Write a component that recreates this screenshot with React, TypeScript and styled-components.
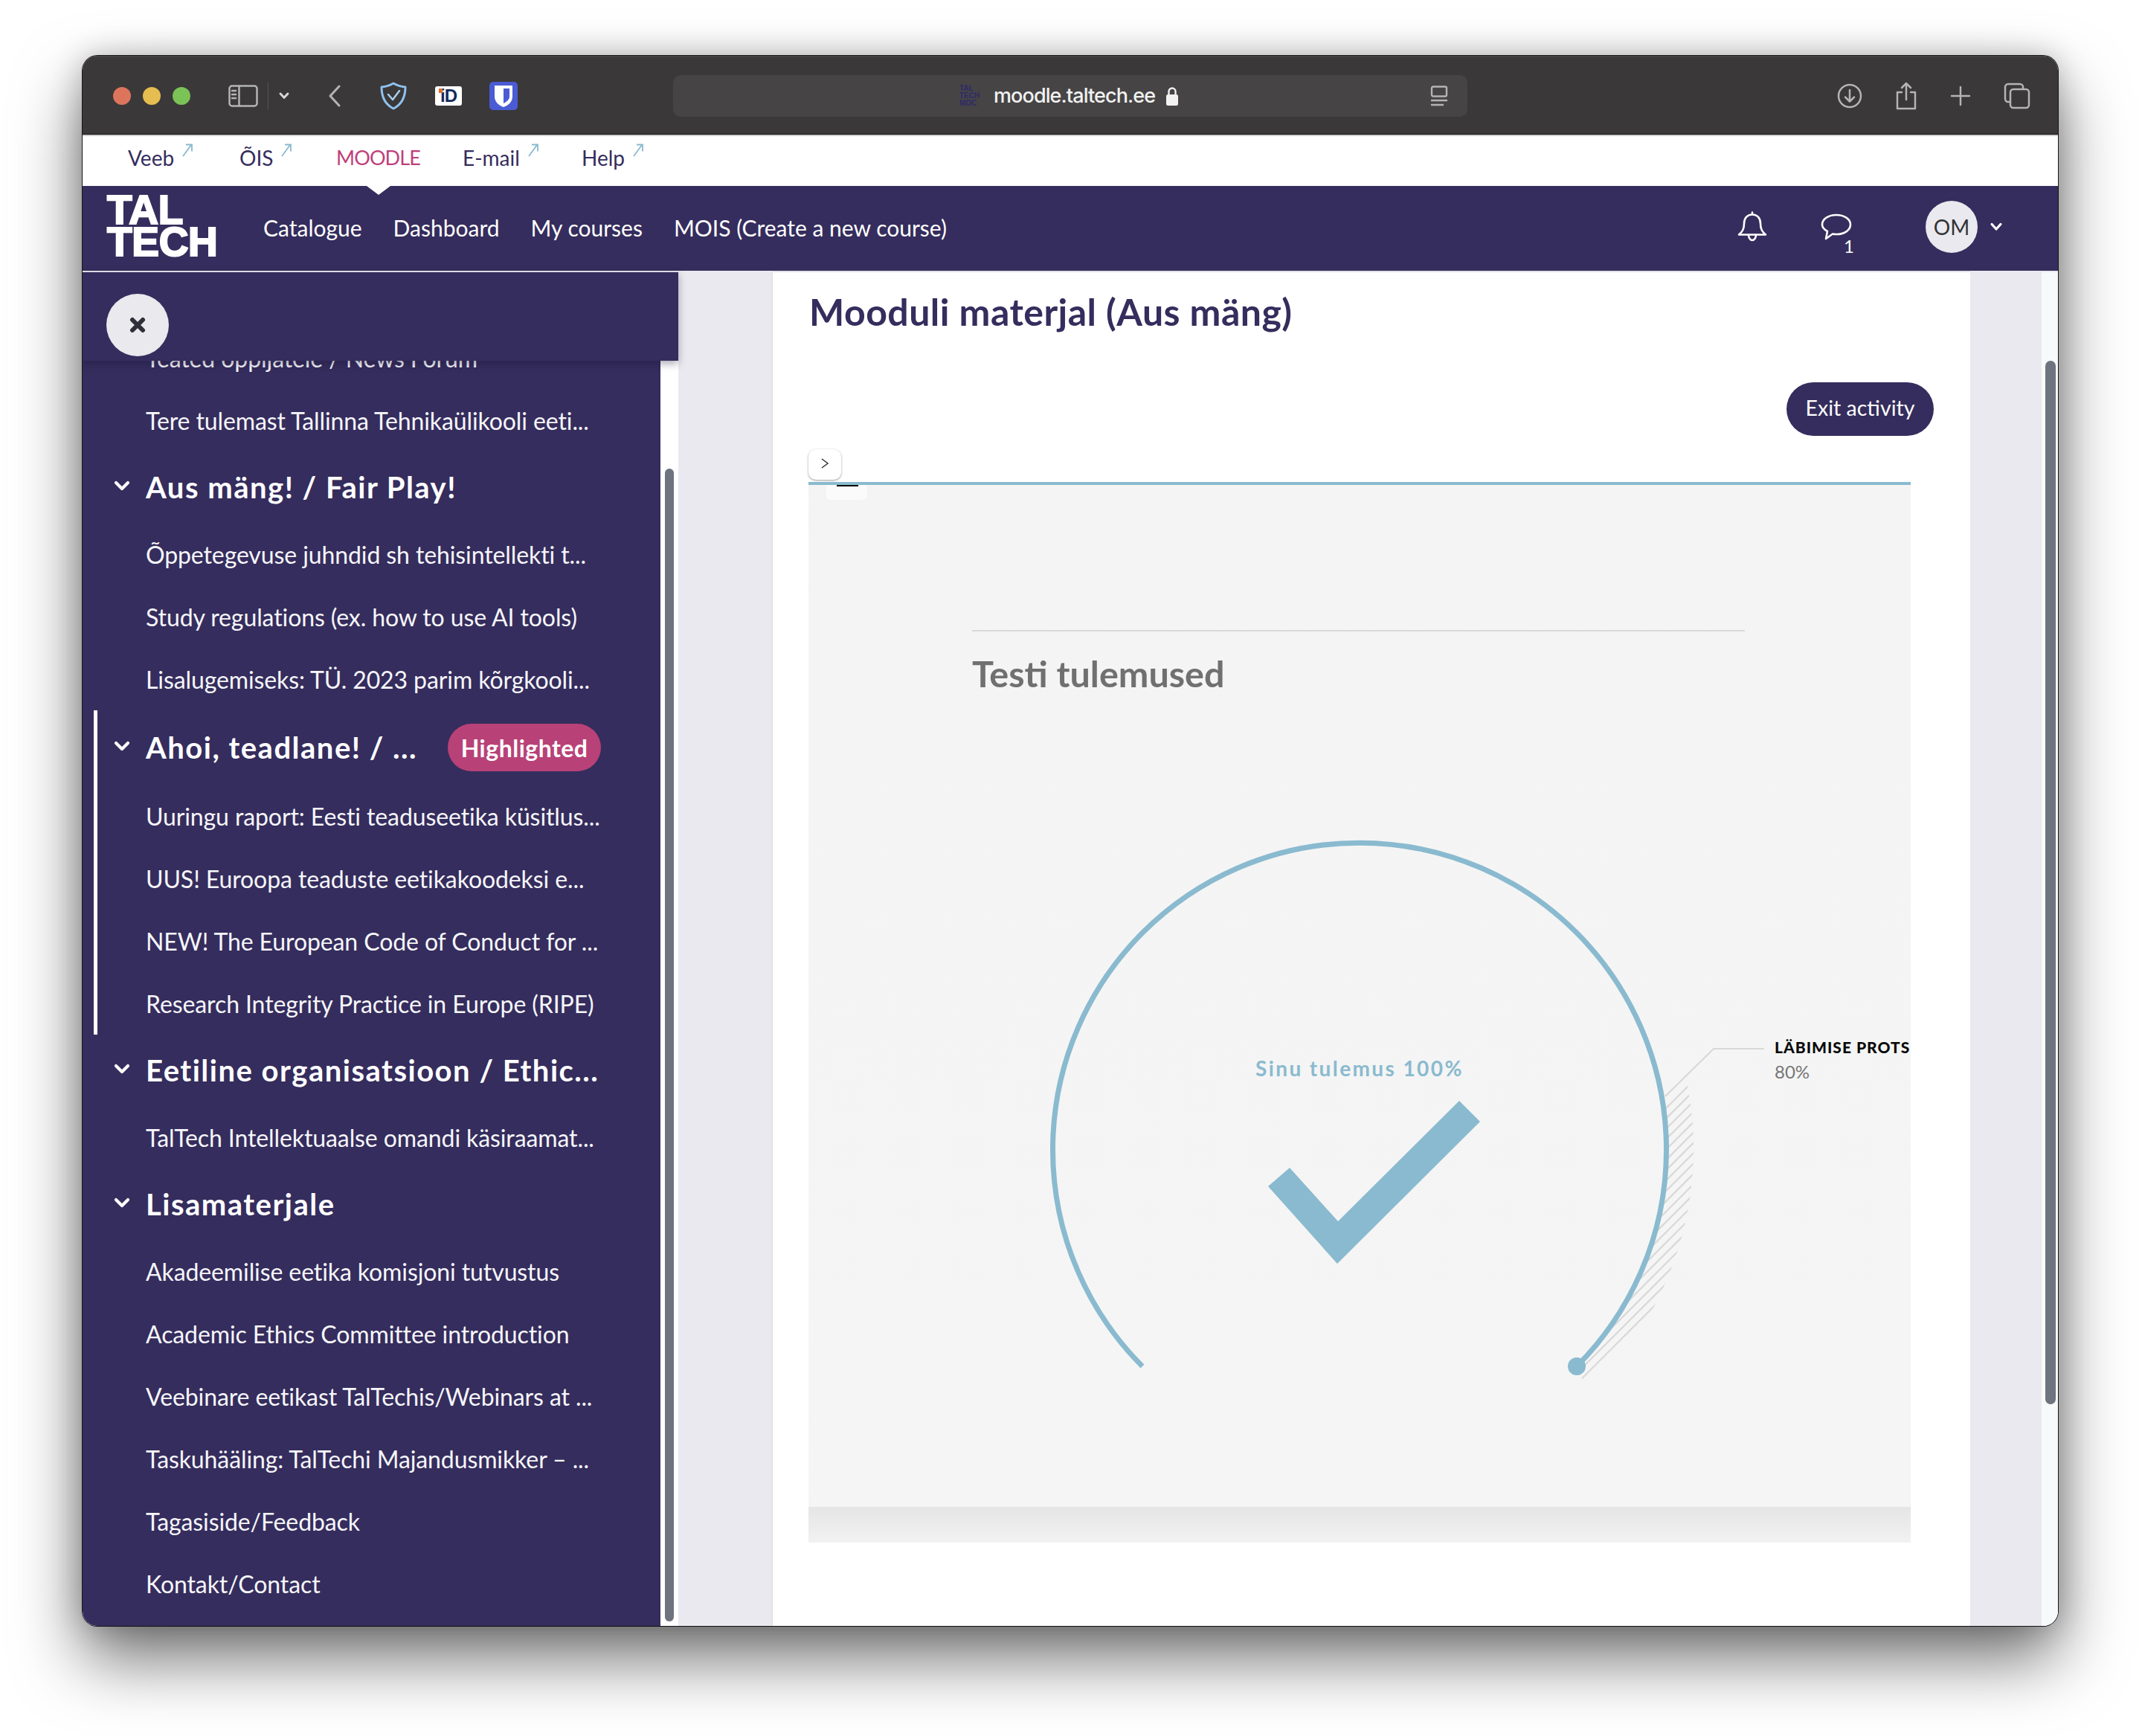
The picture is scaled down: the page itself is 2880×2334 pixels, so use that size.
import React from "react";
import styled, { createGlobalStyle } from "styled-components";

const ink = "#352d5d";
const sky = "#8abacf";
const body = `"Lato", "Open Sans", sans-serif`;

const Global = createGlobalStyle`
  html, body { margin: 0; padding: 0; background: #fff; }
  * { box-sizing: border-box; }
`;

const Page = styled.div`
  width: 2880px; height: 2334px; padding: 75px 113px 148px 111px;
  background: #fff; font-family: ${body}; overflow: hidden;
`;
const Win = styled.div`
  width: 100%; height: 100%; display: flex; flex-direction: column;
  border-radius: 20px; overflow: hidden; background: #fff;
  box-shadow: 0 44px 90px rgba(0,0,0,.56), 0 0 40px rgba(0,0,0,.22), 0 0 0 1px #222;
`;

/* ---------- browser toolbar ---------- */
const Toolbar = styled.div`
  height: 106px; flex: none; background: #3a3839; position: relative;
  display: flex; align-items: center; padding: 0 37px 0 41px;
  border-bottom: 1px solid #111; border-top: 2px solid #444;
`;
const Dots = styled.div`display: flex; gap: 16px; margin-right: 51px;`;
const Dot = styled.span<{ $c: string }>`width: 24px; height: 24px; border-radius: 50%; background: ${p => p.$c};`;
const Tool = styled.span<{ $ml?: number; $w?: number }>`
  display: flex; align-items: center; justify-content: center; flex: none;
  margin-left: ${p => p.$ml ?? 0}px; width: ${p => (p.$w ? p.$w + "px" : "auto")};
`;
const Divider = styled.span`width: 1px; height: 36px; background: #555; margin-left: 13px;`;
const IdBadge = styled.span`
  width: 36px; height: 26px; margin-left: 37px; background: #fff; border-radius: 3px; flex: none; position: relative;
  display: flex; align-items: center; justify-content: center;
  font: 900 24px/1 "Liberation Sans", sans-serif; color: #14295e; letter-spacing: -1px;
  &::before { content: ""; position: absolute; left: 5px; top: 3px; width: 5px; height: 6px; background: #e0702e; }
`;
const UrlBar = styled.div`
  width: 1068px; height: 56px; margin-left: 209px; flex: none; border-radius: 10px; background: #464445;
  display: flex; align-items: center; padding: 0 26px 0 385px; position: relative;
`;
const Favi = styled.span`
  width: 34px; font: 900 10px/10px "Liberation Sans", sans-serif; color: #2e2a6a; flex: none; margin-right: 12px;
`;
const UrlText = styled.span`
  font: 500 27px/1 "Inter", sans-serif; color: #f2f2f2; letter-spacing: -.9px; white-space: nowrap;
`;
const Spacer = styled.span`flex: 1;`;
const RightTools = styled.div`display: flex; align-items: center; gap: 44px; margin-left: auto; flex: none;`;

/* ---------- site link bar ---------- */
const LinkBar = styled.div`
  height: 69px; flex: none; background: #fff; display: flex; align-items: center;
  padding: 0 0 10px 61px; border-top: 2px solid #ccc; position: relative;
`;
const SiteLink = styled.a<{ $w: number; $active?: boolean }>`
  width: ${p => p.$w}px; display: flex; line-height: 1;
  font-size: ${p => (p.$active ? 27 : 28)}px; letter-spacing: ${p => (p.$active ? -0.9 : 0)}px;
  color: ${p => (p.$active ? "#c03f7a" : ink)};
`;
const Up = styled.svg`margin: -6px 0 0 10px;`;
const Notch = styled.span`
  position: absolute; left: 382px; bottom: -12px; z-index: 2; width: 0; height: 0;
  border-left: 16px solid transparent; border-right: 16px solid transparent; border-top: 12px solid #fff;
`;

/* ---------- site header ---------- */
const Header = styled.header`
  height: 116px; flex: none; background: ${ink}; border-bottom: 2px solid #e9e9ef;
  display: flex; align-items: center; color: #fff;
`;
const Logo = styled.div`
  width: 243px; padding-left: 33px; margin-top: -7px; flex: none;
  font: 900 55px/43px "Liberation Sans", sans-serif; letter-spacing: -.3px; color: #fff; -webkit-text-stroke: 2.2px #fff;
`;
const MainNav = styled.nav`display: flex; gap: 42px; font-size: 30px; margin-top: -3px;`;
const NavItem = styled.a`color: #fff; white-space: nowrap;`;
const HeaderIcons = styled.div`margin: -4px 0 0 auto; display: flex; align-items: center; padding-right: 74px;`;
const ChatWrap = styled.span`position: relative; display: flex; margin-left: 72px;`;
const ChatCount = styled.span`position: absolute; right: -3px; bottom: -20px; font-size: 24px; line-height: 1;`;
const Avatar = styled.span`
  width: 70px; height: 70px; margin-left: 99px; border-radius: 50%; background: #e9e9ef; color: #333; flex: none;
  display: flex; align-items: center; justify-content: center; font-size: 28px;
`;
const AvatarCaret = styled.svg`margin-left: 16px;`;

/* ---------- main ---------- */
const Main = styled.div`flex: 1; min-height: 0; display: flex;`;
const Side = styled.aside`width: 801px; flex: none; display: flex; position: relative; background: #fff;`;
const SideOverlay = styled.div`
  position: absolute; left: 0; top: 0; width: 801px; height: 119px; background: ${ink}; z-index: 2;
  box-shadow: 0 4px 10px rgba(20,15,50,.35);
`;
const CloseBtn = styled.button`
  position: absolute; left: 32px; top: 29px; width: 84px; height: 84px; border-radius: 50%; border: 0; padding: 0;
  background: #e9e9ee; display: flex; align-items: center; justify-content: center;
`;
const SideList = styled.div`
  width: 777px; flex: none; background: ${ink}; padding-top: 73px; overflow: hidden; color: #fff;
`;
const SideItem = styled.div`
  height: 84px; display: flex; align-items: center; padding-left: 85px;
  font-size: 32px; letter-spacing: -.1px; white-space: nowrap; color: #f6f6fa;
`;
const SectionRow = styled.div<{ $tall?: boolean }>`
  height: ${p => (p.$tall ? 100 : 96)}px; display: flex; align-items: center; padding-left: 42px;
  font-size: 40px; letter-spacing: 1.5px; font-weight: 700; white-space: nowrap; color: #fff;
`;
const Caret = styled.svg`width: 22px; height: 14px; margin-right: 21px; flex: none; margin-top: -4px;`;
const Badge = styled.span`
  margin-left: 41px; height: 64px; width: 206px; border-radius: 32px; background: #b84277;
  display: flex; align-items: center; justify-content: center; font-size: 32px; letter-spacing: .5px; font-weight: 700;
`;
const ActiveGroup = styled.div`
  margin-left: 15px; border-left: 5px solid #fff;
  & > div { margin-left: -20px; }
`;
const SideTrack = styled.div`flex: 1; padding: 264px 6px 6px;`;
const Thumb = styled.div`height: 100%; background: #6f7380; border-radius: 6px;`;

const Gutter = styled.div<{ $w: number }>`width: ${p => p.$w}px; flex: none; background: #e9e9ef;`;
const Content = styled.main`
  flex: 1; min-width: 0; background: #fff; padding: 23px 49px 0 48px; box-shadow: 0 0 3px rgba(0,0,0,.12);
`;
const Title = styled.h2`
  margin: 0 0 0 1px; font-size: 50px; line-height: 60px; font-weight: 700; color: ${ink}; letter-spacing: .47px;
`;
const ExitRow = styled.div`display: flex; justify-content: flex-end; margin-top: 65px;`;
const ExitBtn = styled.button`
  width: 198px; height: 72px; border-radius: 36px; border: 0; background: ${ink}; color: #fff;
  font: 400 28.5px ${body}; padding: 0 0 4px;
`;
const Tab = styled.div`
  width: 44px; height: 41px; margin-top: 18px; border-radius: 10px; background: #fff; padding-bottom: 3px;
  box-shadow: 0 1px 3px rgba(0,0,0,.4); display: flex; align-items: center; justify-content: center;
`;
const Activity = styled.section`
  width: 1482px; height: 1426px; margin-top: 3px; display: flex; flex-direction: column; overflow: hidden; position: relative;
  border-top: 4px solid ${sky}; background: linear-gradient(#f4f4f4 0, #f5f5f5 1374px, #e5e5e5 1374px, #f2f2f2 1422px);
`;
const DashBox = styled.span`
  position: absolute; left: 24px; top: 0; width: 55px; height: 20px; background: #fbfbfb; border-radius: 0 0 6px 6px;
  &::before { content: ""; position: absolute; left: 14px; top: 0; width: 29px; height: 2px; background: #000; }
`;
const ResultHead = styled.div`height: 348px; flex: none; padding: 195px 223px 0 220px;`;
const Rule = styled.div`height: 2px; background: #d9d9d9;`;
const ResultTitle = styled.h3`
  margin: 26px 0 0; font-size: 48.500px; line-height: 60px; font-weight: 700; color: #707070;
`;
const Stage = styled.div`position: relative; flex: none; width: 1482px; height: 1026px;`;
const GaugeSvg = styled.svg`display: block; position: absolute; left: 0; top: 0;`;
const Score = styled.span`
  position: absolute; left: 601px; top: 418px; font-size: 28px; line-height: 36px; font-weight: 700;
  letter-spacing: 2.4px; color: ${sky}; white-space: nowrap;
`;
const PassLabel = styled.span`
  position: absolute; left: 1299px; top: 396px; font-size: 21px; line-height: 24px; font-weight: 900;
  letter-spacing: 1px; color: #0a0a0a; white-space: nowrap;
`;
const PassValue = styled.span`
  position: absolute; left: 1299px; top: 428px; font-size: 24px; line-height: 26px; color: #777; white-space: nowrap;
`;
const PageTrack = styled.div`width: 22px; flex: none; background: #f8f9fb; padding: 119px 3px 298px 5px;`;
const PageThumb = styled.div`height: 100%; background: #6f7380; border-radius: 7px;`;

/* ---------- icons ---------- */
const ic = { fill: "none", stroke: "#b5b4b4", strokeWidth: 2.5, strokeLinecap: "round" as const, strokeLinejoin: "round" as const };

const SidebarIcon = () => (
  <svg width="40" height="30" viewBox="0 0 40 30" {...ic}>
    <rect x="1.5" y="1.5" width="37" height="27" rx="3.5" />
    <path d="M14.5 2v26M5 8h5M5 13h5M5 18h5" />
  </svg>
);
const Chevron = ({ size = 14, c = "#d8d8d8", w = 3 }: { size?: number; c?: string; w?: number }) => (
  <svg width={size} height={size * 0.7} viewBox="0 0 14 10" fill="none" stroke={c} strokeWidth={w} strokeLinecap="round" strokeLinejoin="round">
    <path d="M2 2l5 5.5L12 2" />
  </svg>
);
const BackIcon = () => (
  <svg width="18" height="30" viewBox="0 0 18 30" {...ic} strokeWidth={3}><path d="M15 2L3 15l12 13" /></svg>
);
const ShieldIcon = () => (
  <svg width="38" height="38" viewBox="0 0 38 38" fill="none" stroke="#8fc1ef" strokeWidth="3" strokeLinejoin="round" strokeLinecap="round">
    <path d="M19 2c5 3 10 4.500 16 5 0 13-4 23-16 29C7 30 3 20 3 7c6-.5 11-2 16-5z" />
    <path d="M12 17l6 7 9-12" stroke="#a9cdec" strokeWidth="2.5" />
  </svg>
);
const BitwardenIcon = () => (
  <svg width="38" height="38" viewBox="0 0 38 38">
    <rect width="38" height="38" rx="5" fill="#4a5bd4" />
    <path d="M7 5h24v15c0 7-6 12-12 14C13 32 7 27 7 20z" fill="#fff" />
    <path d="M19 9h8v11c0 4-4 7-8 9z" fill="#4a5bd4" />
  </svg>
);
const LockIcon = () => (
  <svg width="18" height="26" viewBox="0 0 18 26" fill="none">
    <path d="M4.500 12V7a4.500 4.500 0 019 0v5" stroke="#f2f2f2" strokeWidth="2.4" />
    <rect x="1" y="11" width="16" height="15" rx="2.500" fill="#f2f2f2" />
  </svg>
);
const ReaderIcon = () => (
  <svg width="24" height="28" viewBox="0 0 24 28" fill="none" stroke="#b5b4b4" strokeWidth="2.4" strokeLinecap="round">
    <rect x="2" y="1.500" width="20" height="13" rx="2" />
    <path d="M2 20h20M2 26h15" />
  </svg>
);
const DownloadIcon = () => (
  <svg width="34" height="34" viewBox="0 0 34 34" {...ic}>
    <circle cx="17" cy="17" r="15" /><path d="M17 9v15M11 18.500l6 6 6-6" />
  </svg>
);
const ShareIcon = () => (
  <svg width="30" height="38" viewBox="0 0 30 38" {...ic}>
    <path d="M9 14H3v22h24V14h-6M15 24V2M9 8l6-6 6 6" />
  </svg>
);
const PlusIcon = () => (
  <svg width="28" height="28" viewBox="0 0 28 28" {...ic}><path d="M14 2v24M2 14h24" /></svg>
);
const TabsIcon = () => (
  <svg width="36" height="36" viewBox="0 0 36 36" {...ic}>
    <path d="M8 26H6a4 4 0 01-4-4V6a4 4 0 014-4h16a4 4 0 014 4v2" />
    <rect x="9" y="9" width="25" height="25" rx="4" />
  </svg>
);
const BellIcon = () => (
  <svg width="40" height="42" viewBox="0 0 40 42" fill="none" stroke="#fff" strokeWidth="2.6" strokeLinejoin="round" strokeLinecap="round">
    <path d="M20 1.500v3M20 4.500c-7 0-11 5-11 12 0 8-2.500 11-7 15h36c-4.500-4-7-7-7-15 0-7-4-12-11-12z" />
    <path d="M15 32c0 4 2.500 7 5 7s5-3 5-7" />
  </svg>
);
const ChatIcon = () => (
  <svg width="42" height="36" viewBox="0 0 42 36" fill="none" stroke="#fff" strokeWidth="2.6" strokeLinejoin="round" strokeLinecap="round">
    <path d="M21 2c10.500 0 19 5.500 19 13s-8.500 13-19 13c-2 0-3.500-.2-5-.5L7 34l2-10C4.500 21.500 2 18.500 2 15 2 7.500 10.500 2 21 2z" />
  </svg>
);
const UpArrow = () => (
  <Up width="16" height="20" viewBox="0 0 16 20" fill="none" stroke={sky} strokeWidth="1.8">
    <path d="M2 18L13 3M6 2.500h8v9" />
  </Up>
);
const SideCaret = () => (
  <Caret viewBox="0 0 22 14" fill="none" stroke="#fff" strokeWidth="4.2" strokeLinecap="round" strokeLinejoin="round">
    <path d="M3 3l8 8 8-8" />
  </Caret>
);

const hatch = Array.from({ length: 19 }, (_, i) => 3731 + i * 13.9);

const Gauge = () => (
  <GaugeSvg width="1482" height="1026" viewBox="1088 1000 1482 1026" fill="none">
    <defs>
      <mask id="hatchMask" maskUnits="userSpaceOnUse" x="1088" y="1000" width="1482" height="1026">
        <circle cx="1829" cy="1545" r="449" fill="#fff" />
        <circle cx="1829" cy="1545" r="414" fill="#000" />
        <rect x="1088" y="1600" width="1040" height="426" fill="#000" />
      </mask>
    </defs>
    <g mask="url(#hatchMask)" stroke="#d8d8d8" strokeWidth="2.2">
      {hatch.map(c => (
        <path key={c} d={`M${c - 2400} 2400L${c - 1300} 1300`} />
      ))}
    </g>
    <path d="M2240 1474L2305 1410H2373" stroke="#d8d8d8" strokeWidth="2.2" />
    <path
      d="M1537 1837A412.500 412.500 0 1 1 2121 1837"
      stroke={sky} strokeWidth="7"
    />
    <circle cx="2121" cy="1837" r="12" fill={sky} />
    <polygon
      fill={sky}
      points="1706,1595 1735,1570 1800,1642 1963,1480 1991,1508 1799,1699"
    />
  </GaugeSvg>
);

const top1 = ["Tere tulemast Tallinna Tehnikaülikooli eeti..."];
const fair = [
  "Õppetegevuse juhndid sh tehisintellekti t...",
  "Study regulations (ex. how to use AI tools)",
  "Lisalugemiseks: TÜ. 2023 parim kõrgkooli...",
];
const ahoi = [
  "Uuringu raport: Eesti teaduseetika küsitlus...",
  "UUS! Euroopa teaduste eetikakoodeksi e...",
  "NEW! The European Code of Conduct for ...",
  "Research Integrity Practice in Europe (RIPE)",
];
const extra = [
  "Akadeemilise eetika komisjoni tutvustus",
  "Academic Ethics Committee introduction",
  "Veebinare eetikast TalTechis/Webinars at ...",
  "Taskuhääling: TalTechi Majandusmikker – ...",
  "Tagasiside/Feedback",
  "Kontakt/Contact",
];

export default function App() {
  return (
    <Page>
      <Global />
      <Win>
        <Toolbar>
          <Dots>
            <Dot $c="#dd755c" />
            <Dot $c="#e6bd50" />
            <Dot $c="#7bc257" />
          </Dots>
          <Tool><SidebarIcon /></Tool>
          <Divider />
          <Tool $ml={14}><Chevron /></Tool>
          <Tool $ml={52}><BackIcon /></Tool>
          <Tool $ml={51}><ShieldIcon /></Tool>
          <IdBadge>iD</IdBadge>
          <Tool $ml={37}><BitwardenIcon /></Tool>
          <UrlBar>
            <Favi>TAL TECH MOC</Favi>
            <UrlText>moodle.taltech.ee</UrlText>
            <Tool $ml={14}><LockIcon /></Tool>
            <Spacer />
            <ReaderIcon />
          </UrlBar>
          <RightTools>
            <DownloadIcon />
            <ShareIcon />
            <PlusIcon />
            <TabsIcon />
          </RightTools>
        </Toolbar>

        <LinkBar>
          <SiteLink $w={150}>Veeb<UpArrow /></SiteLink>
          <SiteLink $w={130}>ÕIS<UpArrow /></SiteLink>
          <SiteLink $w={170} $active>MOODLE</SiteLink>
          <SiteLink $w={160}>E-mail<UpArrow /></SiteLink>
          <SiteLink $w={120}>Help<UpArrow /></SiteLink>
          <Notch />
        </LinkBar>

        <Header>
          <Logo>TAL<br />TECH</Logo>
          <MainNav>
            <NavItem>Catalogue</NavItem>
            <NavItem>Dashboard</NavItem>
            <NavItem>My courses</NavItem>
            <NavItem>MOIS (Create a new course)</NavItem>
          </MainNav>
          <HeaderIcons>
            <BellIcon />
            <ChatWrap><ChatIcon /><ChatCount>1</ChatCount></ChatWrap>
            <Avatar>OM</Avatar>
            <AvatarCaret width="18" height="12" viewBox="0 0 14 10" fill="none" stroke="#fff" strokeWidth="2.6" strokeLinecap="round" strokeLinejoin="round">
              <path d="M2 2l5 5.500L12 2" />
            </AvatarCaret>
          </HeaderIcons>
        </Header>

        <Main>
          <Side>
            <SideOverlay>
              <CloseBtn aria-label="Close">
                <svg width="22" height="22" viewBox="0 0 22 22" stroke="#2f2f3a" strokeWidth="6" strokeLinecap="round">
                  <path d="M4 4l14 14M18 4L4 18" />
                </svg>
              </CloseBtn>
            </SideOverlay>
            <SideList>
              <SideItem>Teated õppijatele / News Forum</SideItem>
              {top1.map(t => <SideItem key={t}>{t}</SideItem>)}
              <SectionRow><SideCaret />Aus mäng! / Fair Play!</SectionRow>
              {fair.map(t => <SideItem key={t}>{t}</SideItem>)}
              <ActiveGroup>
                <SectionRow $tall><SideCaret />Ahoi, teadlane! / ...<Badge>Highlighted</Badge></SectionRow>
                {ahoi.map(t => <SideItem key={t}>{t}</SideItem>)}
              </ActiveGroup>
              <SectionRow><SideCaret />Eetiline organisatsioon / Ethic...</SectionRow>
              <SideItem>TalTech Intellektuaalse omandi käsiraamat...</SideItem>
              <SectionRow><SideCaret />Lisamaterjale</SectionRow>
              {extra.map(t => <SideItem key={t}>{t}</SideItem>)}
            </SideList>
            <SideTrack><Thumb /></SideTrack>
          </Side>
          <Gutter $w={127} />
          <Content>
            <Title>Mooduli materjal (Aus mäng)</Title>
            <ExitRow><ExitBtn>Exit activity</ExitBtn></ExitRow>
            <Tab>
              <svg width="14" height="16" viewBox="0 0 14 16" fill="none" stroke="#333" strokeWidth="1.500"><path d="M3 2l8 6-8 6" /></svg>
            </Tab>
            <Activity>
              <DashBox />
              <ResultHead>
                <Rule />
                <ResultTitle>Testi tulemused</ResultTitle>
              </ResultHead>
              <Stage>
                <Gauge />
                <Score>Sinu tulemus 100%</Score>
                <PassLabel>LÄBIMISE PROTSENT</PassLabel>
                <PassValue>80%</PassValue>
              </Stage>
            </Activity>
          </Content>
          <Gutter $w={96} />
          <PageTrack><PageThumb /></PageTrack>
        </Main>
      </Win>
    </Page>
  );
}
